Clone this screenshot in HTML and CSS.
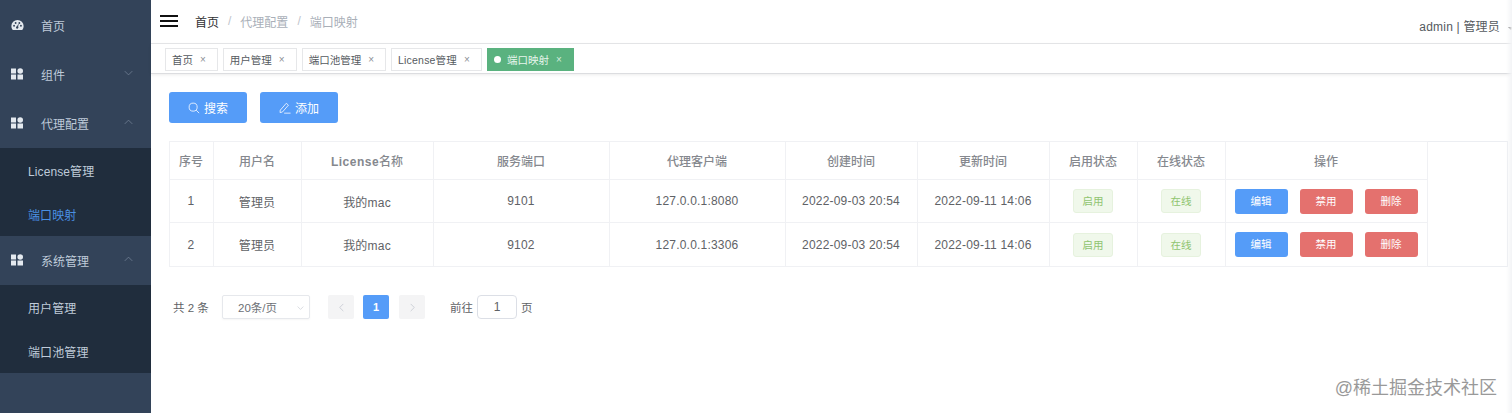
FILE: index.html
```html
<!DOCTYPE html>
<html lang="zh-CN">
<head>
<meta charset="utf-8">
<title>端口映射</title>
<link rel="stylesheet" href="styles.css">
</head>
<body>
<svg class="defs" width="0" height="0">
  <symbol id="grid" viewBox="0 0 12 12"><path d="M0 0.5h5v5H0zM0 6.500h5v5H0zM6.500 6.500h5.500v5H6.500z"/><circle cx="9.200" cy="3" r="2.800"/></symbol>
  <symbol id="down" viewBox="0 0 12 7"><path d="M1 1l5 5 5-5" fill="none" stroke="currentColor" stroke-width="1"/></symbol>
  <symbol id="up" viewBox="0 0 12 7"><path d="M1 6l5-5 5 5" fill="none" stroke="currentColor" stroke-width="1"/></symbol>
</svg>
<div class="app">
  <aside class="sidebar">
    <div class="menu-item">
      <svg class="menu-icon gauge" viewBox="0 0 14 12"><path fill-rule="evenodd" d="M7 0.500a6.600 6.600 0 0 1 6.600 6.600c0 1.700-.6 3.200-1.600 4.300H2C1 10.300.4 8.800.4 7.100A6.600 6.600 0 0 1 7 .5zM3.300 5.800a1 1 0 1 0 0 2 1 1 0 0 0 0-2zM5 2.900a1 1 0 1 0 0 2 1 1 0 0 0 0-2zM9 2.900a1 1 0 1 0 0 2 1 1 0 0 0 0-2zM10.700 5.800a1 1 0 1 0 0 2 1 1 0 0 0 0-2zM8.400 3.800L6.500 7.300a1.300 1.300 0 1 0 1.200.5z"/></svg>
      <span class="menu-label">首页</span>
    </div>
    <div class="menu-item">
      <svg class="menu-icon"><use href="#grid"/></svg>
      <span class="menu-label">组件</span>
      <svg class="chevron"><use href="#down"/></svg>
    </div>
    <div class="menu-item">
      <svg class="menu-icon"><use href="#grid"/></svg>
      <span class="menu-label">代理配置</span>
      <svg class="chevron"><use href="#up"/></svg>
    </div>
    <div class="submenu">
      <div class="sub-item">License管理</div>
      <div class="sub-item active">端口映射</div>
    </div>
    <div class="menu-item">
      <svg class="menu-icon"><use href="#grid"/></svg>
      <span class="menu-label">系统管理</span>
      <svg class="chevron"><use href="#up"/></svg>
    </div>
    <div class="submenu">
      <div class="sub-item">用户管理</div>
      <div class="sub-item">端口池管理</div>
    </div>
  </aside>

  <main class="main">
    <header class="navbar">
      <div class="hamburger"><i></i><i></i><i></i></div>
      <nav class="crumbs">
        <span class="crumb-home">首页</span><span class="sep">/</span><span>代理配置</span><span class="sep">/</span><span>端口映射</span>
      </nav>
      <div class="user">admin | 管理员<span class="caret"></span></div>
    </header>

    <div class="tags">
      <span class="tag">首页<b>×</b></span>
      <span class="tag">用户管理<b>×</b></span>
      <span class="tag">端口池管理<b>×</b></span>
      <span class="tag tag-lat">License管理<b>×</b></span>
      <span class="tag current"><em></em>端口映射<b>×</b></span>
    </div>

    <section class="content">
      <div class="toolbar">
        <button class="btn">
          <svg class="btn-icon" viewBox="0 0 14 14"><circle cx="6" cy="6" r="4.700"/><path d="M9.500 9.500L13 13"/></svg>搜索
        </button>
        <button class="btn">
          <svg class="btn-icon" viewBox="0 0 14 14"><path d="M1.500 9.500L8.500 1.500l2.500 2.200-7 8-2.800.6zM6 13h7.500"/></svg>添加
        </button>
      </div>

      <table class="grid">
        <colgroup>
          <col class="c1"><col class="c2"><col class="c3"><col class="c4"><col class="c5"><col class="c6"><col class="c7"><col class="c8"><col class="c9"><col class="c10"><col>
        </colgroup>
        <thead>
          <tr><th>序号</th><th>用户名</th><th><span class="lat">License</span>名称</th><th>服务端口</th><th>代理客户端</th><th>创建时间</th><th>更新时间</th><th>启用状态</th><th>在线状态</th><th>操作</th><th class="filler"></th></tr>
        </thead>
        <tbody>
          <tr>
            <td>1</td><td>管理员</td><td>我的mac</td><td>9101</td><td>127.0.0.1:8080</td><td>2022-09-03 20:54</td><td>2022-09-11 14:06</td>
            <td><span class="status">启用</span></td><td><span class="status">在线</span></td>
            <td><div class="actions"><span class="mini blue">编辑</span><span class="mini red">禁用</span><span class="mini red">删除</span></div></td><td class="filler"></td>
          </tr>
          <tr>
            <td>2</td><td>管理员</td><td>我的mac</td><td>9102</td><td>127.0.0.1:3306</td><td>2022-09-03 20:54</td><td>2022-09-11 14:06</td>
            <td><span class="status">启用</span></td><td><span class="status">在线</span></td>
            <td><div class="actions"><span class="mini blue">编辑</span><span class="mini red">禁用</span><span class="mini red">删除</span></div></td><td class="filler"></td>
          </tr>
        </tbody>
      </table>

      <div class="pager">
        <span class="total">共 2 条</span>
        <span class="select">20条/页<svg class="select-arrow"><use href="#down"/></svg></span>
        <span class="page-btn prev"><svg viewBox="0 0 7 12"><path d="M6 1L1 6l5 5"/></svg></span>
        <span class="page-btn on">1</span>
        <span class="page-btn next"><svg viewBox="0 0 7 12"><path d="M1 1l5 5-5 5"/></svg></span>
        <span class="goto">前往</span>
        <span class="page-input">1</span>
        <span class="page-unit">页</span>
      </div>
    </section>
  </main>
</div>
<div class="edge"></div>
<div class="watermark">@稀土掘金技术社区</div>
</body>
</html>
```

FILE: styles.css
```css
* { box-sizing: border-box; }
html, body { margin: 0; height: 100%; overflow: hidden; background: #fff; }
body { font-family: "Liberation Sans", "Noto Sans CJK SC", sans-serif; font-size: 12px; color: #606266; }
.defs { position: absolute; }

.app { display: flex; height: 413px; }

.sidebar { width: 151px; flex: none; background: #334359; padding-top: 1px; color: #bfcbd9; }
.menu-item { height: 49px; display: flex; align-items: center; position: relative; padding-left: 11px; }
.menu-icon { width: 12px; height: 12px; fill: #e4e9ef; flex: none; margin-right: 18px; margin-top: -2px; }
.gauge { width: 13px; margin-right: 17px; }
.menu-label { font-size: 12px; }
.chevron { position: absolute; right: 18px; top: 20px; width: 9px; height: 6px; color: #76859a; }
.submenu { background: #202d3d; }
.sub-item { height: 44px; line-height: 44px; padding: 2px 0 0 28px; font-size: 12px; letter-spacing: .1px; }
.sub-item.active { color: #4a90e2; }

.main { flex: 1; min-width: 0; display: flex; flex-direction: column; }

.navbar { height: 44px; flex: none; display: flex; align-items: center; border-bottom: 1px solid #e3e4e6; position: relative; }
.hamburger { width: 18px; margin-left: 9px; margin-top: -2px; display: flex; flex-direction: column; gap: 3px; }
.hamburger i { display: block; height: 2px; background: #111; }
.crumbs { margin-left: 17px; margin-top: -1px; color: #a9afb8; display: flex; align-items: center; }
.crumb-home { color: #303133; }
.sep { margin: 0 9px; color: #c0c4cc; }
.user { margin-left: auto; margin-right: 12px; margin-top: 8px; color: #555a60; white-space: nowrap; position: relative; letter-spacing: .2px; }
.caret { position: absolute; left: 89px; top: 10px; width: 0; height: 0; border: 3px solid transparent; border-top: 3px solid #555; }

.tags { height: 30px; flex: none; display: flex; align-items: flex-start; gap: 5px; padding: 4px 0 0 14px; border-bottom: 1px solid #dcdde0; box-shadow: 0 1px 3px rgba(0,0,0,.08); font-size: 10.500px; }
.tag { height: 23px; padding: 0 11px 0 6px; display: flex; align-items: center; border: 1px solid #e6e7e9; color: #555a60; white-space: nowrap; }
.tag-lat { letter-spacing: .2px; }
.tag b { font-weight: 400; font-size: 10px; color: #8d9096; margin-left: 7px; }
.tag.current { background: #5ab27f; border-color: #5ab27f; color: #e6f5ec; }
.tag.current b { color: #d3ecdd; }
.tag em { width: 7px; height: 7px; border-radius: 50%; background: #fff; margin-right: 6px; }

.content { flex: 1; padding: 18px 0 0 18px; }
.toolbar { display: flex; gap: 13px; margin-bottom: 18px; }
.btn { width: 78px; height: 31px; border: 0; border-radius: 3px; background: #559cf8; color: #fff; font: inherit; display: flex; align-items: center; justify-content: center; gap: 4px; padding: 0; }
.btn-icon { width: 12px; height: 12px; fill: none; stroke: #f2f7ff; stroke-width: 1; }

.grid { width: 1339px; table-layout: fixed; border-collapse: collapse; border: 1px solid #eceef2; color: #606266; text-align: center; }
.grid th, .grid td { border: 1px solid #f0f1f4; padding: 0 1px 0 0; white-space: nowrap; }
.grid th { height: 38px; color: #85888e; font-weight: 500; }
.lat { font-weight: 700; letter-spacing: .5px; }
.grid td { height: 43px; letter-spacing: .2px; }
.grid tbody tr:last-child td { height: 44px; }
.grid .filler { border-right: 0; border-top: 0; border-bottom: 0; }
.grid thead .filler { border-top: 1px solid #eceef2; }
.c1 { width: 44px; } .c2 { width: 88px; } .c3 { width: 132px; } .c4 { width: 176px; } .c5 { width: 176px; }
.c6 { width: 132px; } .c7 { width: 132px; } .c8 { width: 88px; } .c9 { width: 88px; } .c10 { width: 202px; }

.status { display: inline-block; width: 40px; height: 24px; line-height: 22px; border: 1px solid #e6f2de; border-radius: 3px; background: #f0f8eb; color: #8fc46f; font-size: 10.500px; letter-spacing: 0; }
.actions { display: flex; justify-content: center; gap: 12px; }
.mini { width: 53px; height: 25px; line-height: 25px; border-radius: 3px; color: #fff; font-size: 10.500px; letter-spacing: 0; }
.blue { background: #559cf8; }
.red { background: #e4716e; }

.pager { display: flex; align-items: center; height: 24px; margin-top: 28px; color: #606266; font-size: 11.500px; }
.total { margin-left: 4px; width: 49px; }
.select { width: 88px; height: 24px; border: 1px solid #e6e8ec; border-radius: 2px; box-shadow: 0 1px 2px rgba(0,0,0,.04); display: flex; align-items: center; padding-left: 15px; position: relative; font-size: 11.500px; color: #6c6f75; }
.select-arrow { position: absolute; right: 5px; top: 10px; width: 7px; height: 4px; color: #c0c4cc; }
.page-btn { width: 26px; height: 24px; border-radius: 2px; background: #f4f4f5; display: flex; align-items: center; justify-content: center; }
.page-btn svg { width: 5px; height: 9px; fill: none; stroke: #c0c4cc; stroke-width: 1; }
.prev { margin-left: 18px; }
.on { margin-left: 9px; background: #559cf8; color: #fff; font-weight: 700; font-size: 11px; }
.next { margin-left: 10px; }
.goto { margin-left: 25px; }
.page-input { width: 40px; height: 24px; margin-left: 4px; border: 1px solid #dcdfe6; border-radius: 4px; display: flex; align-items: center; justify-content: center; font-size: 12px; }
.page-unit { margin-left: 4px; }

.edge { position: absolute; top: 0; right: 0; width: 6px; height: 413px; background: linear-gradient(to right, rgba(240,241,243,0), #f3f4f6); }
.watermark { position: absolute; right: 15px; top: 378px; font-size: 18px; line-height: 20px; color: #999; }
```
